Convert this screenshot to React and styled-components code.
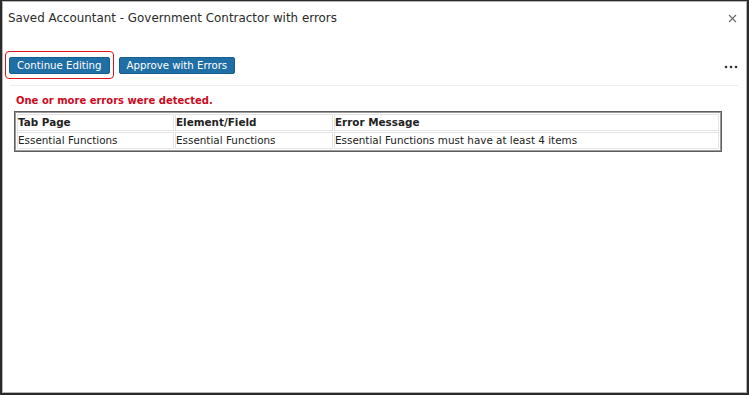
import React from "react";
import styled, { createGlobalStyle } from "styled-components";

const Global = createGlobalStyle`
  html, body { margin: 0; padding: 0; background: #fff; }
  body { font-family: "DejaVu Sans", Verdana, sans-serif; }
`;

const Frame = styled.div`
  width: 749px;
  height: 395px;
  box-sizing: border-box;
  border: 2px solid #2a2a2a;
  border-top-width: 1px;
  box-shadow: inset 0 0 0 1px #b5b5b5;
  background: #fff;
  display: flex;
  flex-direction: column;
  overflow: hidden;
`;

const TitleBar = styled.div`
  display: flex;
  align-items: center;
  justify-content: space-between;
  padding: 9px 10px 0 6px;
  height: 16px;
`;

const Title = styled.h1`
  margin: 0;
  font-size: 11.9px;
  font-weight: normal;
  line-height: 16px;
  color: #2a2a2a;
`;

const CloseButton = styled.button`
  border: 0;
  background: none;
  padding: 0;
  width: 10px;
  height: 10px;
  display: flex;
  align-items: center;
  justify-content: center;
  cursor: pointer;
`;

const Toolbar = styled.div`
  display: flex;
  align-items: center;
  gap: 9px;
  margin-top: 31px;
  padding: 0 9px 0 7px;
`;

const Highlight = styled.span`
  position: relative;
  display: inline-flex;
  &::after {
    content: "";
    position: absolute;
    top: -6px;
    bottom: -5px;
    left: -4px;
    right: -4px;
    border: 1.5px solid #e3101a;
    border-radius: 4px;
    pointer-events: none;
  }
`;

const Button = styled.button`
  height: 17px;
  box-sizing: border-box;
  padding: 0 7px;
  background: #1f6ea6;
  border: 1px solid #175d8e;
  border-radius: 2px;
  color: #fff;
  font-family: "DejaVu Sans", Verdana, sans-serif;
  font-size: 10.2px;
  line-height: 15px;
  cursor: pointer;
`;

const Spacer = styled.div`
  flex: 1;
`;

const MoreButton = styled.button`
  border: 0;
  background: none;
  padding: 0;
  width: 14px;
  height: 6px;
  display: flex;
  align-items: center;
  margin-top: 2px;
`;

const Divider = styled.div`
  height: 1px;
  background: #eeeeee;
  margin: 11px 9px 0 8px;
`;

const ErrorText = styled.p`
  margin: 8px 0 0 14px;
  font-size: 10px;
  font-weight: bold;
  line-height: 14px;
  color: #cc0a1e;
`;

const Table = styled.table`
  margin: 3px 0 0 12px;
  width: 708px;
  border: 1px solid #5e5e5e;
  box-shadow: inset 0 0 0 1px #9a9a9a;
  border-spacing: 1px;
  padding: 1px;
  table-layout: fixed;
`;

const Cell = styled.td`
  border: 1px solid #e4e4e4;
  padding: 0;
  height: 15px;
  font-size: 10.4px;
  line-height: 15px;
  font-weight: ${(p) => (p.$head ? "bold" : "normal")};
  color: #222;
  text-align: left;
  white-space: nowrap;
`;

const columns = ["Tab Page", "Element/Field", "Error Message"];
const rows = [
  ["Essential Functions", "Essential Functions", "Essential Functions must have at least 4 items"],
];

export default function App() {
  return (
    <>
      <Global />
      <Frame>
        <TitleBar>
          <Title>Saved Accountant - Government Contractor with errors</Title>
          <CloseButton aria-label="Close">
            <svg width="9" height="9" viewBox="0 0 9 9">
              <path d="M1 1L8 8M8 1L1 8" stroke="#6a6a6a" strokeWidth="1.1" fill="none" />
            </svg>
          </CloseButton>
        </TitleBar>
        <Toolbar>
          <Highlight>
            <Button>Continue Editing</Button>
          </Highlight>
          <Button>Approve with Errors</Button>
          <Spacer />
          <MoreButton aria-label="More">
            <svg width="14" height="4" viewBox="0 0 14 4">
              <circle cx="2" cy="2" r="1.3" fill="#333" />
              <circle cx="7" cy="2" r="1.3" fill="#333" />
              <circle cx="12" cy="2" r="1.3" fill="#333" />
            </svg>
          </MoreButton>
        </Toolbar>
        <Divider />
        <ErrorText>One or more errors were detected.</ErrorText>
        <Table>
          <colgroup>
            <col style={{ width: "157px" }} />
            <col style={{ width: "158px" }} />
            <col />
          </colgroup>
          <thead>
            <tr>
              {columns.map((c) => (
                <Cell as="th" $head key={c}>{c}</Cell>
              ))}
            </tr>
          </thead>
          <tbody>
            {rows.map((r, i) => (
              <tr key={i}>
                {r.map((v, j) => (
                  <Cell key={j}>{v}</Cell>
                ))}
              </tr>
            ))}
          </tbody>
        </Table>
      </Frame>
    </>
  );
}
